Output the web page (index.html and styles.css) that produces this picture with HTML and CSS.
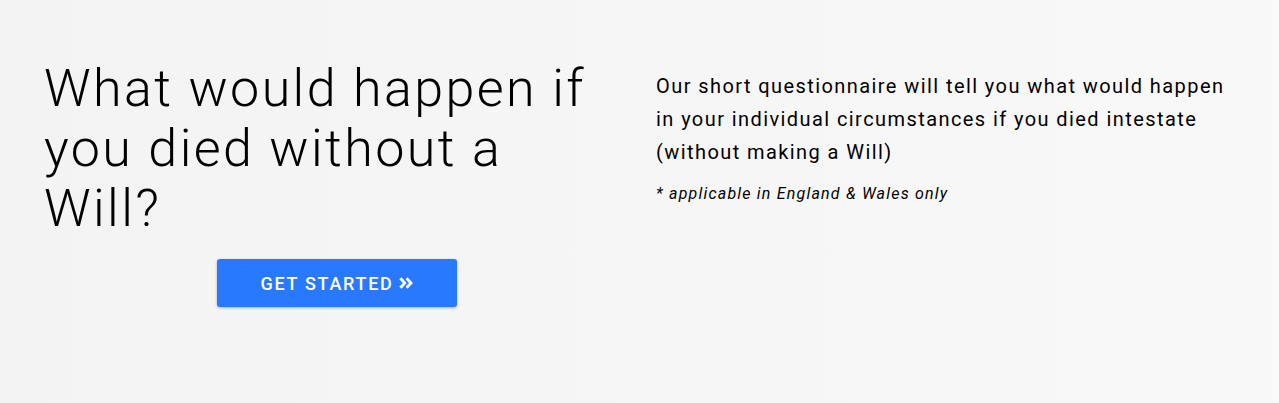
FILE: index.html
```html
<!DOCTYPE html>
<html lang="en">
<head>
<meta charset="utf-8">
<title>Intestacy</title>
<link rel="stylesheet" href="styles.css">
</head>
<body>
<section class="hero">
  <div class="hero-left">
    <h1 class="hero-title">What would happen if you died without a Will?</h1>
    <div class="hero-action">
      <a class="btn-start" href="#">GET STARTED <svg class="chev" width="14" height="12" viewBox="0 0 14 12" aria-hidden="true"><path d="M1.4 1.2 L5.8 6 L1.4 10.8 M7.6 1.2 L12 6 L7.6 10.8" fill="none" stroke="#fff" stroke-width="2.8" stroke-linejoin="miter"/></svg></a>
    </div>
  </div>
  <div class="hero-right">
    <p class="hero-text">Our short questionnaire will tell you what would happen in your individual circumstances if you died intestate (without making a Will)</p>
    <p class="hero-note">* applicable in England &amp; Wales only</p>
  </div>
</section>
</body>
</html>
```
FILE: styles.css
```css
html, body {
  margin: 0;
  padding: 0;
}
body {
  background: linear-gradient(to right, #f3f3f3 0%, #f5f5f5 35%, #f7f7f7 70%, #f9f9f9 100%);
  font-family: Roboto, "Liberation Sans", sans-serif;
  color: #000;
  height: 403px;
  overflow: hidden;
}
.hero {
  display: grid;
  grid-template-columns: 586px 1fr;
  column-gap: 26px;
  padding: 59px 30px 0 44px;
}
.hero-title {
  margin: 0;
  font-weight: 300;
  font-size: 52px;
  line-height: 60px;
  letter-spacing: 2.4px;
}
.hero-action {
  display: flex;
  justify-content: center;
  margin-top: 20px;
}
.btn-start {
  display: flex;
  align-items: center;
  justify-content: center;
  width: 240px;
  height: 48px;
  background: #2979ff;
  color: #fff;
  text-decoration: none;
  font-weight: 500;
  font-size: 18px;
  letter-spacing: 1.7px;
  border-radius: 3px;
  box-shadow: 0 1px 3px rgba(0,0,0,0.3);
}
.chev {
  margin-left: 6px;
  display: block;
}
.hero-right {
  padding-top: 11px;
  max-width: 578px;
}
.hero-text {
  margin: 0;
  font-size: 20px;
  line-height: 33px;
  letter-spacing: 1.42px;
}
.hero-note {
  margin: 15px 0 0;
  font-size: 16px;
  font-style: italic;
  letter-spacing: 1.2px;
  line-height: 20px;
}
```
